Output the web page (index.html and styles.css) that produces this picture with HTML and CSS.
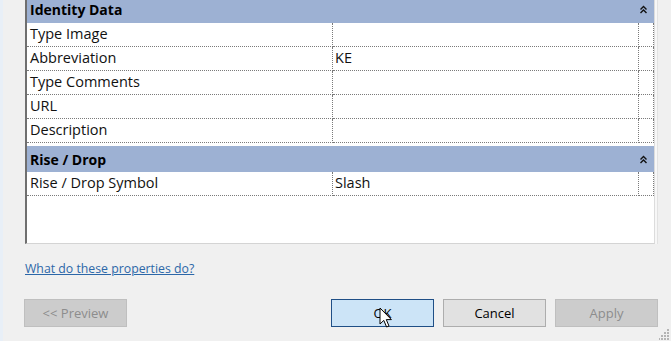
FILE: index.html
```html
<!DOCTYPE html>
<html>
<head>
<meta charset="utf-8">
<link rel="stylesheet" href="styles.css">
</head>
<body>
<div class="dialog">
  <div class="grid">
    <div class="group first"><span>Identity Data</span>
      <svg class="collapse" width="9" height="9" viewBox="0 0 9 9"><path d="M1.5 4.5 L4.5 1.5 L7.5 4.5 M1.5 8 L4.5 5 L7.5 8" fill="none" stroke="#111" stroke-width="1.4"/></svg>
    </div>
    <div class="row"><div class="c name">Type Image</div><div class="c val"></div><div class="c end"></div></div>
    <div class="row"><div class="c name">Abbreviation</div><div class="c val">KE</div><div class="c end"></div></div>
    <div class="row"><div class="c name">Type Comments</div><div class="c val"></div><div class="c end"></div></div>
    <div class="row"><div class="c name">URL</div><div class="c val"></div><div class="c end"></div></div>
    <div class="row"><div class="c name">Description</div><div class="c val"></div><div class="c end"></div></div>
    <div class="gap"></div>
    <div class="group"><span>Rise / Drop</span>
      <svg class="collapse" width="9" height="9" viewBox="0 0 9 9"><path d="M1.5 4.5 L4.5 1.5 L7.5 4.5 M1.5 8 L4.5 5 L7.5 8" fill="none" stroke="#111" stroke-width="1.4"/></svg>
    </div>
    <div class="row"><div class="c name">Rise / Drop Symbol</div><div class="c val">Slash</div><div class="c end"></div></div>
  </div>
  <div class="help"><a href="#">What do these properties do?</a></div>
  <div class="buttons">
    <button class="btn disabled preview">&lt;&lt; Preview</button>
    <button class="btn ok">OK
      <svg class="cursor" width="14" height="22" viewBox="0 0 14 22"><path d="M1 1 L1 17 L4.8 13.4 L7.6 20 L10 19 L7.3 12.6 L12.4 12.6 Z" fill="#fff" stroke="#000" stroke-width="1" stroke-linejoin="round"/></svg>
    </button>
    <button class="btn">Cancel</button>
    <button class="btn disabled">Apply</button>
  </div>
  <svg class="grip" width="11" height="11" viewBox="0 0 11 11"><g fill="#b4b4b4"><rect x="8" y="0" width="2" height="2"/><rect x="5" y="3" width="2" height="2"/><rect x="8" y="3" width="2" height="2"/><rect x="2" y="6" width="2" height="2"/><rect x="5" y="6" width="2" height="2"/><rect x="8" y="6" width="2" height="2"/><rect x="-1" y="9" width="2" height="2"/><rect x="2" y="9" width="2" height="2"/><rect x="5" y="9" width="2" height="2"/><rect x="8" y="9" width="2" height="2"/></g></svg>
</div>
</body>
</html>
```

FILE: styles.css
```css
html, body {
  margin: 0;
  padding: 0;
}
body {
  width: 671px;
  height: 341px;
  overflow: hidden;
  background: #f0f0f0;
  font-family: "Open Sans", "Noto Sans", sans-serif;
  font-size: 13px;
  color: #000;
}
.dialog {
  position: relative;
  height: 341px;
  box-sizing: border-box;
  border-left: 3px solid #e8eff7;
}
.grid {
  margin-left: 22px;
  width: 630px;
  height: 244px;
  box-sizing: border-box;
  background: #fff;
  border-left: 2px solid #6f6f6f;
  border-right: 1px solid #dcdcdc;
  border-bottom: 1px solid #d4d4d4;
  box-shadow: 2px 0 0 #f7f7f7, 3px 0 0 #e2e2e2;
}
.group {
  height: 26px;
  background: #9db1d3;
  display: flex;
  align-items: center;
  justify-content: space-between;
  padding: 0 6px 0 3px;
  font-weight: bold;
  font-size: 14px;
}
.group.first {
  height: 23px;
  align-items: flex-start;
}
.group.first span { line-height: 20px; }
.group.first .collapse { margin-top: 5px; }
.collapse { display: block; }
.row {
  display: grid;
  grid-template-columns: 306px 306px 15px;
  height: 24px;
  font-size: 14.5px;
}
.c {
  box-sizing: border-box;
  border-right: 1px dotted #7a7a7a;
  border-bottom: 1px dotted #7a7a7a;
  line-height: 22px;
  padding-left: 3px;
  white-space: nowrap;
  color: #111;
}
.c.val { padding-left: 2px; }
.gap { height: 3px; }
.help {
  margin: 15px 0 0 22px;
  height: 20px;
  line-height: 20px;
  font-size: 12.3px;
}
.help a { color: #2c67a8; text-decoration: underline; }
.buttons {
  display: flex;
  gap: 9px;
  margin: 20px 0 0 21px;
  width: 634px;
}
.btn {
  position: relative;
  width: 103px;
  height: 28px;
  box-sizing: border-box;
  background: #e1e1e1;
  border: 1px solid #adadad;
  font-family: "Open Sans", "Noto Sans", sans-serif;
  font-size: 13px;
  color: #000;
  padding: 0;
}
.btn.preview { margin-right: auto; }
.btn.disabled {
  background: #cccccc;
  border-color: #bfbfbf;
  color: #8d8d8d;
}
.btn.ok {
  background: #cce4f7;
  border-color: #1f4f86;
}
.cursor {
  position: absolute;
  left: 47px;
  top: 7px;
}
.grip {
  position: absolute;
  right: 1px;
  bottom: 1px;
}
```
